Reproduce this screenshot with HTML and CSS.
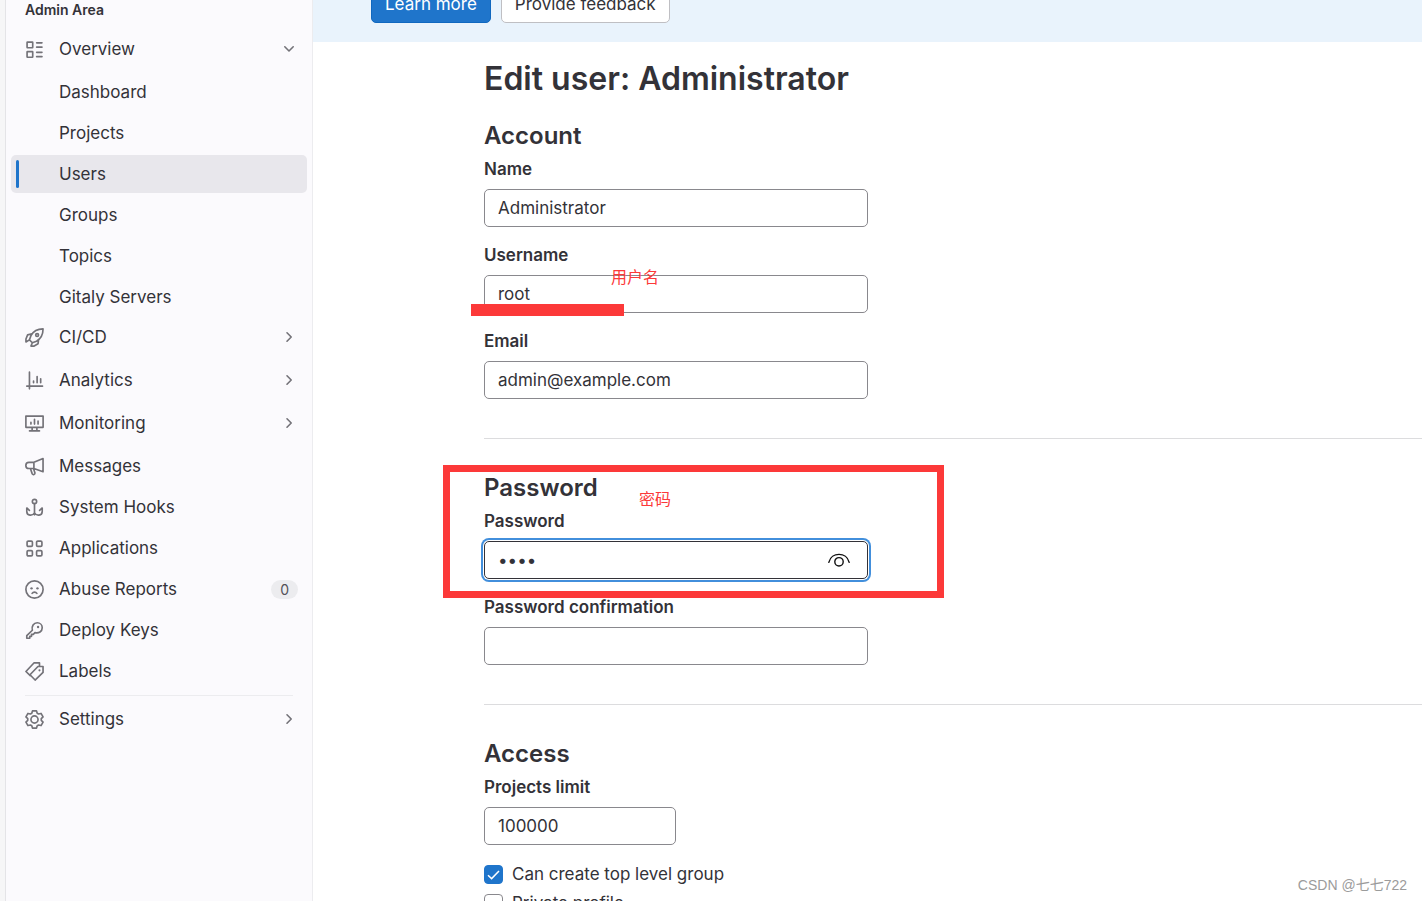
FILE: index.html
```html
<!DOCTYPE html>
<html lang="en">
<head>
<meta charset="utf-8">
<meta name="viewport" content="width=device-width, initial-scale=1">
<title>Edit user: Administrator</title>
<link rel="stylesheet" href="styles.css">
</head>
<body>
<div class="page">
  <nav class="sidebar" aria-label="Admin Area">
    <p class="sidebar-title">Admin Area</p>
    <ul class="nav-list">
      <li>
        <button class="nav-item" type="button" aria-expanded="true">
          <svg class="icon" viewBox="0 0 16 16"><rect x="1.75" y="1.75" width="4.75" height="4.75" rx=".3"/><rect x="1.75" y="9.75" width="4.75" height="4.75" rx=".3"/><path d="M9.8 2.4h4.5M9.8 6h4.5M9.8 10.4h4.5M9.8 14h4.5"/></svg>
          <span class="nav-label">Overview</span>
          <svg class="chevron" viewBox="0 0 14 14"><path d="M2.800 4.800 7 9l4.200-4.200"/></svg>
        </button>
        <ul class="sub-list">
          <li><a class="nav-item sub-item" href="#">Dashboard</a></li>
          <li><a class="nav-item sub-item" href="#">Projects</a></li>
          <li><a class="nav-item sub-item current" href="#" aria-current="page">Users</a></li>
          <li><a class="nav-item sub-item" href="#">Groups</a></li>
          <li><a class="nav-item sub-item" href="#">Topics</a></li>
          <li><a class="nav-item sub-item" href="#">Gitaly Servers</a></li>
        </ul>
      </li>
      <li class="collapsed">
        <button class="nav-item" type="button" aria-expanded="false">
          <svg class="icon" viewBox="0 0 16 16"><path d="M15.200.8C9.800.8 6.800 3.200 5 6.500L3.700 10l2.500 2.400 3.500-1.300c3.200-1.900 5.500-4.800 5.500-10.300ZM5.800 4.900 2.200 5.800.8 9.300v2.500L3.700 10M11.400 10 11 13.200l-3.300 2H5l1.200-2.800"/><circle cx="10.200" cy="5.900" r="1.200"/></svg>
          <span class="nav-label">CI/CD</span>
          <svg class="chevron" viewBox="0 0 14 14"><path d="M5 2.800 9.200 7 5 11.200"/></svg>
        </button>
      </li>
      <li class="collapsed">
        <button class="nav-item" type="button" aria-expanded="false">
          <svg class="icon" viewBox="0 0 16 16"><path d="M3.750 1v14M1.500 12.750h13.250M7.200 8.400v1.500M10.200 4.700v5.200M13.200 6.600v3.300"/></svg>
          <span class="nav-label">Analytics</span>
          <svg class="chevron" viewBox="0 0 14 14"><path d="M5 2.800 9.200 7 5 11.200"/></svg>
        </button>
      </li>
      <li class="collapsed">
        <button class="nav-item" type="button" aria-expanded="false">
          <svg class="icon" viewBox="0 0 16 16"><path d="M.75 1.750h14.500v9.500H.75zM6 11.500v2.500M10 11.500v2.500M3.800 14.250h8.400M5 7v1.500M8 4.500v4M11 6v2.500"/></svg>
          <span class="nav-label">Monitoring</span>
          <svg class="chevron" viewBox="0 0 14 14"><path d="M5 2.800 9.200 7 5 11.200"/></svg>
        </button>
      </li>
      <li class="leaf">
        <a class="nav-item" href="#">
          <svg class="icon" viewBox="0 0 16 16"><path d="M7.500 4.500 15.200 1.300v11.200L7.500 9.700M7.500 4.500H3.300a2.600 2.600 0 0 0 0 5.200h4.200V4.500ZM4.600 9.900l1.500 4.300a1.250 1.250 0 0 0 2.300-.8L7.200 9.900"/></svg>
          <span class="nav-label">Messages</span>
        </a>
      </li>
      <li class="leaf">
        <a class="nav-item" href="#">
          <svg class="icon" viewBox="0 0 16 16"><circle cx="8" cy="2.900" r="1.800"/><path d="M8 4.700v9.500M1.500 11.300V8.400l2.200 2M14.500 11.300V8.400l-2.200 2M1.500 9.500v1.800c0 3.900 5 3.900 6.500 1.200 1.500 2.700 6.500 2.700 6.500-1.200V9.500"/></svg>
          <span class="nav-label">System Hooks</span>
        </a>
      </li>
      <li class="leaf">
        <a class="nav-item" href="#">
          <svg class="icon" viewBox="0 0 16 16"><rect x="1.750" y="1.750" width="4.500" height="4.500" rx="1"/><rect x="9.750" y="1.750" width="4.500" height="4.500" rx="1"/><rect x="1.750" y="9.750" width="4.500" height="4.500" rx="1"/><rect x="9.750" y="9.750" width="4.500" height="4.500" rx="1"/></svg>
          <span class="nav-label">Applications</span>
        </a>
      </li>
      <li class="leaf">
        <a class="nav-item" href="#">
          <svg class="icon" viewBox="0 0 16 16"><circle cx="8" cy="8" r="7.250"/><path d="M6 11.300c.9-1.400 3.100-1.400 4 0"/><circle class="dot" cx="5.500" cy="7" r="1"/><circle class="dot" cx="10.500" cy="7" r="1"/></svg>
          <span class="nav-label">Abuse Reports</span>
          <span class="badge">0</span>
        </a>
      </li>
      <li class="leaf">
        <a class="nav-item" href="#">
          <svg class="icon" viewBox="0 0 16 16"><path d="M6.200 7.800C5.300 4.500 7.300 1.500 10.300 1.500c2.400 0 4.200 1.900 4.200 4.200 0 3-2.900 5-6.100 4.100L7 11.200H5.500v1.700H4v1.600H1.500V12.300l4.700-4.500Z"/><circle class="dot" cx="11" cy="5" r="1"/></svg>
          <span class="nav-label">Deploy Keys</span>
        </a>
      </li>
      <li class="leaf">
        <a class="nav-item" href="#">
          <svg class="icon" viewBox="0 0 16 16"><path d="M15.200 3.800v5L8.500 15.200 4.200 10.700l6.700-6.900h4.300ZM12.200 3.500V.8H7.500L.8 8l3.600 3.500"/><circle class="dot" cx="12.200" cy="7" r=".9"/></svg>
          <span class="nav-label">Labels</span>
        </a>
      </li>
      <li class="separated">
        <button class="nav-item" type="button" aria-expanded="false">
          <svg class="icon" viewBox="0 0 16 16"><path d="M6.300.8h3.400l.6 2 1.100.6 2.100-.5 1.700 2.900-1.500 1.500v1.400l1.500 1.500-1.700 2.900-2.100-.5-1.100.6-.6 2H6.300l-.6-2-1.100-.6-2.100.5L.8 10.200l1.500-1.500V7.300L.8 5.800l1.700-2.900 2.100.5 1.100-.6.600-2Z"/><circle cx="8" cy="8" r="3"/></svg>
          <span class="nav-label">Settings</span>
          <svg class="chevron" viewBox="0 0 14 14"><path d="M5 2.800 9.200 7 5 11.200"/></svg>
        </button>
      </li>
    </ul>
  </nav>

  <main class="main">
    <div class="banner">
      <button class="btn btn-confirm" type="button">Learn more</button>
      <button class="btn" type="button">Provide feedback</button>
    </div>
    <form class="content">
      <h1>Edit user: Administrator</h1>
      <section class="group">
        <h2>Account</h2>
        <div class="field">
          <label for="name">Name</label>
          <input class="control" id="name" type="text" value="Administrator">
        </div>
        <div class="field">
          <label for="username">Username</label>
          <input class="control" id="username" type="text" value="root">
          <span class="note note-username">用户名</span>
          <span class="underline"></span>
        </div>
        <div class="field">
          <label for="email">Email</label>
          <input class="control" id="email" type="email" value="admin@example.com">
        </div>
      </section>
      <section class="group">
        <h2>Password</h2>
        <div class="field">
          <label for="password">Password</label>
          <input class="control focused" id="password" type="password" value="root">
          <button class="reveal" type="button" aria-label="Show password">
            <svg viewBox="0 0 24 16"><path d="M1.800 10.300C4.500-.3 19.500-.3 22.200 10.300"/><circle cx="12" cy="9.800" r="4.200"/></svg>
          </button>
        </div>
        <div class="field">
          <label for="confirmation">Password confirmation</label>
          <input class="control" id="confirmation" type="password">
        </div>
        <span class="frame"></span>
        <span class="note note-password">密码</span>
      </section>
      <section class="group">
        <h2>Access</h2>
        <div class="field">
          <label for="limit">Projects limit</label>
          <input class="control control-short" id="limit" type="text" inputmode="numeric" value="100000">
        </div>
        <div class="checks">
          <label class="check"><input type="checkbox" checked>Can create top level group</label>
          <label class="check"><input type="checkbox">Private profile</label>
        </div>
      </section>
    </form>
  </main>
  <span class="watermark">CSDN @七七722</span>
</div>
</body>
</html>
```
FILE: styles.css
```css
* {
  box-sizing: border-box;
}

body {
  margin: 0;
  color: #333238;
  background: #fff;
  font: 400 17px/24px Inter, "Noto Sans CJK SC", sans-serif;
}

.page {
  position: relative;
  display: flex;
  height: 100vh;
  overflow: hidden;
}

/* Sidebar */
.sidebar {
  flex: 0 0 313px;
  padding: 0 5px;
  border-left: 5px solid #f6f6f7;
  border-right: 1px solid #ececef;
  background: #fbfafd;
  box-shadow: inset 1px 0 #e4e4e7;
}

.sidebar-title {
  margin: 0 0 10px;
  padding-left: 15px;
  font-size: 14px;
  font-weight: 600;
  line-height: 20px;
}

.nav-list,
.sub-list {
  display: flex;
  flex-direction: column;
  margin: 0;
  padding: 0;
  list-style: none;
}

.sidebar .nav-list {
  gap: 2px;
  padding-left: 1px;
}

.sub-list {
  gap: 3px;
  margin-top: 5px;
}

.collapsed {
  margin-bottom: 3px;
}

.leaf {
  margin-bottom: 1px;
}

.nav-item {
  display: flex;
  align-items: center;
  width: 100%;
  height: 38px;
  margin: 0;
  padding: 0 9px 0 14px;
  border: 0;
  border-radius: 5px;
  background: none;
  color: inherit;
  font: inherit;
  text-align: left;
  text-decoration: none;
}

.nav-label {
  flex: 1;
  margin-left: 15px;
}

.nav-item.sub-item {
  padding-left: 48px;
}

.current {
  position: relative;
  background: #e8e7ec;
}

.current::before {
  content: "";
  position: absolute;
  left: 5px;
  top: 5px;
  bottom: 5px;
  width: 3px;
  border-radius: 2px;
  background: #1f75cb;
}

.icon,
.chevron,
.reveal svg {
  fill: none;
  stroke: #737278;
  stroke-width: 1.4;
  stroke-linecap: round;
  stroke-linejoin: round;
}

.icon {
  width: 19px;
  height: 19px;
}

.chevron {
  width: 14px;
  height: 14px;
  margin-right: 2px;
  stroke-width: 1.6;
}

.icon .dot {
  fill: #737278;
  stroke: none;
}

.badge {
  padding: 0 9px;
  border-radius: 10px;
  background: #ececef;
  color: #535158;
  font-size: 14px;
  line-height: 19px;
}

.separated::before {
  content: "";
  display: block;
  height: 1px;
  margin: 2px 14px 4px;
  background: #ececef;
}

/* Main column */
.main {
  flex: 1;
  min-width: 0;
}

.banner {
  display: flex;
  align-items: flex-end;
  gap: 10px;
  height: 42px;
  padding: 0 58px 19px;
  overflow: hidden;
  background: #e9f3fc;
}

.btn {
  flex: none;
  height: 38px;
  padding: 0 13px 1px;
  border: 1px solid #bfbfc3;
  border-radius: 5px;
  background: #fff;
  color: #333238;
  font: inherit;
}

.btn-confirm {
  border-color: #1068bf;
  background: #1f75cb;
  color: #fff;
}

.content {
  padding: 16px 0 0 171px;
}

h1 {
  margin: 0 0 20px;
  font-size: 32px;
  font-weight: 600;
  line-height: 42px;
}

h2 {
  margin: 0 0 5px;
  font-size: 24px;
  font-weight: 600;
  line-height: 32px;
}

.group {
  position: relative;
}

.group + .group {
  margin-top: 39px;
  padding-top: 33px;
  border-top: 1px solid #dcdcde;
}

.field {
  position: relative;
  display: flex;
  flex-direction: column;
  gap: 8px;
  max-width: 384px;
}

.field + .field {
  margin-top: 16px;
}

.field label {
  font-weight: 600;
}

.control {
  width: 100%;
  height: 38px;
  padding: 0 13px 1px;
  border: 1px solid #89888d;
  border-radius: 5px;
  background: #fff;
  color: #333238;
  font: inherit;
}

.control-short {
  width: 192px;
}

.focused {
  border-color: #333238;
  box-shadow: 0 0 0 1px #fff, 0 0 0 3px #428fdc;
}

.reveal {
  position: absolute;
  right: 17px;
  bottom: 11px;
  width: 24px;
  height: 16px;
  padding: 0;
  border: 0;
  background: none;
}

.reveal svg {
  display: block;
  width: 24px;
  height: 16px;
  stroke: #111;
}

.checks {
  display: flex;
  flex-direction: column;
  gap: 5px;
  margin-top: 17px;
}

.check {
  display: flex;
  align-items: center;
  gap: 9px;
}

.check input {
  appearance: none;
  width: 19px;
  height: 19px;
  margin: 0;
  border: 1px solid #89888d;
  border-radius: 4px;
  background: #fff;
}

.check input:checked {
  border-color: #1f75cb;
  background: #1f75cb url("data:image/svg+xml,%3Csvg xmlns='http://www.w3.org/2000/svg' viewBox='0 0 17 17'%3E%3Cpath d='M3 9.200l3.600 3.400L14 5' fill='none' stroke='white' stroke-width='1.500'/%3E%3C/svg%3E") center / 17px 17px no-repeat;
}

/* Annotations laid over the form */
.note {
  position: absolute;
  color: #fc3939;
  font: 16px/24px "Noto Sans CJK SC", sans-serif;
}

.note-username {
  left: 127px;
  top: 21px;
}

.underline {
  position: absolute;
  left: -13px;
  bottom: -3px;
  width: 153px;
  height: 12px;
  background: #fc3939;
}

.note-password {
  left: 155px;
  top: 47px;
}

.frame {
  position: absolute;
  left: -41px;
  top: 26px;
  width: 501px;
  height: 133px;
  border: 7px solid #fc3939;
  pointer-events: none;
}

.watermark {
  position: absolute;
  right: 15px;
  bottom: 4px;
  color: #9b9b9b;
  font: 14px/24px "Liberation Sans", "Noto Sans CJK SC", sans-serif;
}
```
